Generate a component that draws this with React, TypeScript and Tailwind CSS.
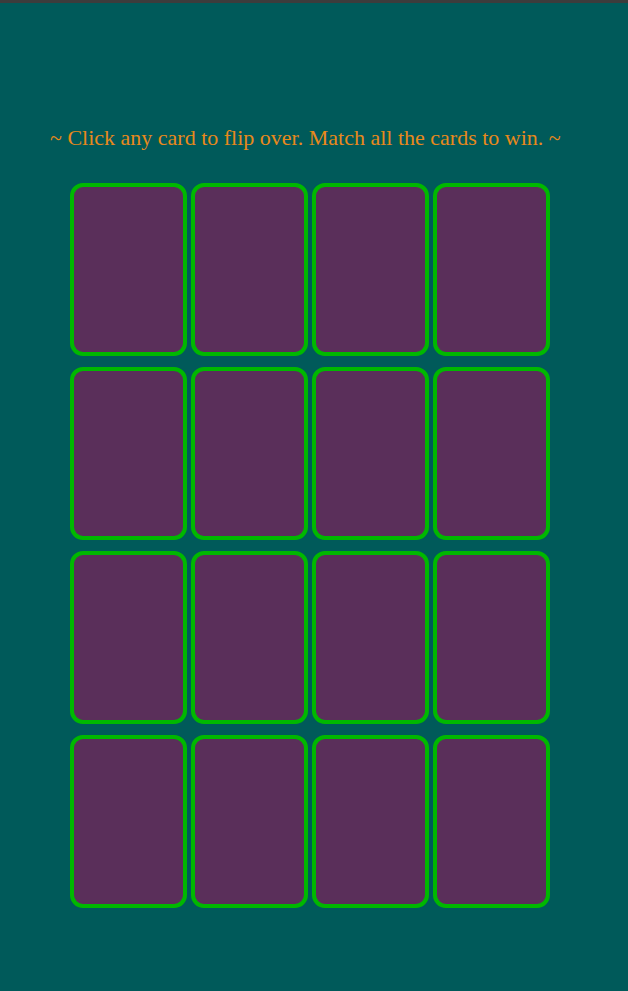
const cards = Array.from({ length: 16 }, (_, i) => i)

function Card() {
  return (
    <button className="h-[173px] w-[117px] rounded-[13px] border-4 border-[#00b800] bg-[#5a2f5a]" />
  )
}

export default function App() {
  return (
    <div className="min-h-[991px] border-t-[3px] border-[#3c3c3c] bg-[#005a5a] font-['Liberation_Serif',serif]">
      <div className="pt-[120px]">
        <p className="pl-[50px] text-[22px] leading-[30px] text-[#e8891a]">
          ~ Click any card to flip over. Match all the cards to win. ~
        </p>
        <div className="mt-[30px] ml-[70px] grid w-fit grid-cols-[repeat(4,117px)] gap-x-[4px] gap-y-[11px]">
          {cards.map((c) => (
            <Card key={c} />
          ))}
        </div>
      </div>
    </div>
  )
}
